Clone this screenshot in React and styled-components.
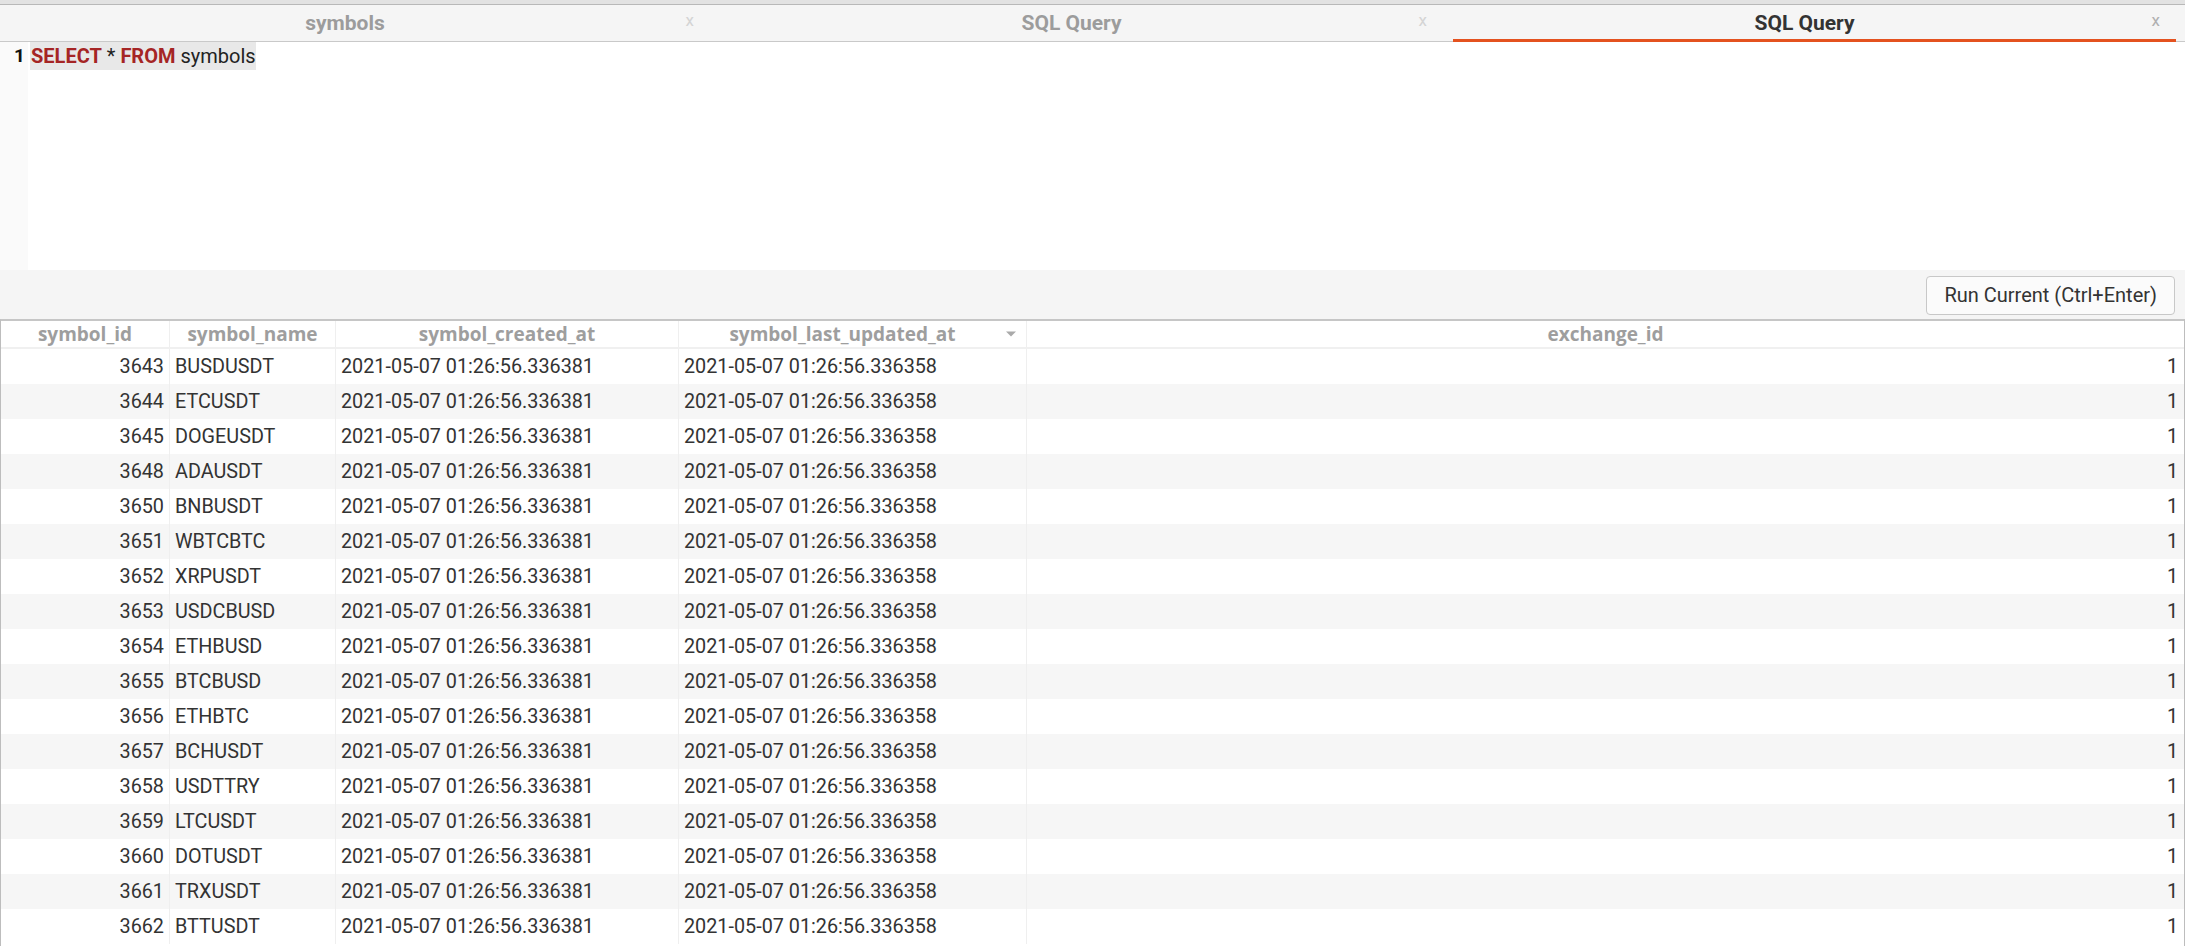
import React from "react";
import styled, { createGlobalStyle } from "styled-components";

const Global = createGlobalStyle`
  html, body { margin: 0; padding: 0; height: 100%; overflow: hidden; background: #fff; }
  #root { height: 100%; }
  * { box-sizing: border-box; }
`;

const FONT = `"Roboto", "Lato", "Noto Sans", sans-serif`;
const HEAD_FONT = `"Open Sans", "Roboto", sans-serif`;

const Page = styled.div`
  height: 100vh;
  display: flex;
  flex-direction: column;
  font-family: ${FONT};
  color: #333;
`;

const TopStrip = styled.div`
  height: 5px;
  background: #e2e2e2;
  border-bottom: 1px solid #b8b8b8;
  flex: none;
`;

const TabBar = styled.div`
  display: flex;
  gap: 10px;
  padding-right: 9px;
  height: 37px;
  background: #f5f5f5;
  border-bottom: 1px solid #c9c9c9;
  flex: none;
`;

const Tab = styled.div`
  flex: ${(p) => (p.$fill ? "1" : "none")};
  width: ${(p) => (p.$fill ? "auto" : "723px")};
  position: relative;
  display: flex;
  align-items: center;
  justify-content: center;
  padding-right: 20px;
  font-weight: 700;
  font-size: 21px;
  color: ${(p) => (p.$active ? "#333" : "#9c9c9c")};
  border-bottom: 3px solid ${(p) => (p.$active ? "#e4521f" : "transparent")};
  margin-bottom: -1px;
  padding-top: 2px;
`;

const Close = styled.span`
  position: absolute;
  right: 16px;
  top: 50%;
  transform: translateY(-58%);
  font-size: 17px;
  font-weight: 400;
  color: ${(p) => (p.$active ? "#b0b0b0" : "#d4d4d4")};
`;

const Editor = styled.div`
  display: flex;
  height: 228px;
  flex: none;
  background: #fff;
`;

const Gutter = styled.div`
  width: 28px;
  background: #fafafa;
  display: flex;
  flex-direction: column;
  align-items: flex-end;
`;

const LineNo = styled.div`
  height: 28px;
  line-height: 28px;
  font-weight: 700;
  font-size: 19px;
  color: #111;
  padding-right: 3px;
`;

const Code = styled.div`
  flex: 1;
  padding-left: 2px;
`;

const CodeLine = styled.div`
  height: 28px;
  line-height: 28px;
  font-size: 20px;
  color: #222;
`;

const Selected = styled.span`
  display: inline-block;
  background: #e8e8e8;
  height: 28px;
  padding-left: 1px;
`;

const Keyword = styled.span`
  color: #a52525;
  font-weight: 700;
`;

const Toolbar = styled.div`
  height: 49px;
  flex: none;
  background: #f5f5f5;
  display: flex;
  align-items: center;
  justify-content: flex-end;
  padding-right: 10px;
`;

const RunButton = styled.button`
  height: 39px;
  padding: 0 17px;
  border: 1px solid #c8c8c8;
  border-radius: 4px;
  background: #fbfbfb;
  font-family: ${FONT};
  font-size: 20px;
  color: #333;
  margin-top: 1px;
`;

const TableWrap = styled.div`
  flex: 1;
  overflow: hidden;
  border-top: 2px solid #c6c6c6;
  border-left: 1px solid #bdbdbd;
  border-right: 1px solid #bdbdbd;
  background: #fff;
`;

const COLS = "169px 166px 343px 348px 1fr";

const HeaderRow = styled.div`
  display: grid;
  grid-template-columns: ${COLS};
  height: 28px;
  border-bottom: 2px solid #f0f0f0;
`;

const HeadCell = styled.div`
  position: relative;
  display: flex;
  align-items: center;
  justify-content: center;
  padding-right: ${(p) => (p.$sorted ? "20px" : "0")};
  font-family: ${HEAD_FONT};
  font-weight: 700;
  font-size: 19px;
  color: #9e9e9e;
  border-right: 1px solid #efefef;
  &:last-child { border-right: none; }
`;

const Caret = styled.span`
  position: absolute;
  right: 10px;
  top: 50%;
  transform: translateY(-50%);
  width: 0;
  height: 0;
  border-left: 5px solid transparent;
  border-right: 5px solid transparent;
  border-top: 5px solid #aaa;
`;

const Row = styled.div`
  display: grid;
  grid-template-columns: ${COLS};
  height: 35px;
  background: ${(p) => (p.$striped ? "#f6f6f6" : "#fff")};
`;

const Cell = styled.div`
  display: flex;
  align-items: center;
  justify-content: ${(p) => (p.$right ? "flex-end" : "flex-start")};
  padding: 0 5px;
  font-size: 19.8px;
  color: #333;
  border-right: 1px solid #efefef;
  white-space: nowrap;
  &:last-child { border-right: none; padding-right: 6px; }
`;

const DATA = [
  [3643, "BUSDUSDT"],
  [3644, "ETCUSDT"],
  [3645, "DOGEUSDT"],
  [3648, "ADAUSDT"],
  [3650, "BNBUSDT"],
  [3651, "WBTCBTC"],
  [3652, "XRPUSDT"],
  [3653, "USDCBUSD"],
  [3654, "ETHBUSD"],
  [3655, "BTCBUSD"],
  [3656, "ETHBTC"],
  [3657, "BCHUSDT"],
  [3658, "USDTTRY"],
  [3659, "LTCUSDT"],
  [3660, "DOTUSDT"],
  [3661, "TRXUSDT"],
  [3662, "BTTUSDT"],
];

const TABS = [
  { label: "symbols", fill: true },
  { label: "SQL Query" },
  { label: "SQL Query", active: true },
];

export default function App() {
  return (
    <>
      <Global />
      <Page>
        <TopStrip />
        <TabBar>
          {TABS.map((t, i) => (
            <Tab key={i} $active={t.active} $fill={t.fill}>
              {t.label}
              <Close $active={t.active}>x</Close>
            </Tab>
          ))}
        </TabBar>
        <Editor>
          <Gutter>
            <LineNo>1</LineNo>
          </Gutter>
          <Code>
            <CodeLine>
              <Selected>
                <Keyword>SELECT</Keyword> * <Keyword>FROM</Keyword> symbols
              </Selected>
            </CodeLine>
          </Code>
        </Editor>
        <Toolbar>
          <RunButton>Run Current (Ctrl+Enter)</RunButton>
        </Toolbar>
        <TableWrap>
          <HeaderRow>
            <HeadCell>symbol_id</HeadCell>
            <HeadCell>symbol_name</HeadCell>
            <HeadCell>symbol_created_at</HeadCell>
            <HeadCell $sorted>
              symbol_last_updated_at
              <Caret />
            </HeadCell>
            <HeadCell>exchange_id</HeadCell>
          </HeaderRow>
          {DATA.map(([id, name], i) => (
            <Row key={id} $striped={i % 2 === 1}>
              <Cell $right>{id}</Cell>
              <Cell>{name}</Cell>
              <Cell>2021-05-07 01:26:56.336381</Cell>
              <Cell>2021-05-07 01:26:56.336358</Cell>
              <Cell $right>1</Cell>
            </Row>
          ))}
        </TableWrap>
      </Page>
    </>
  );
}
